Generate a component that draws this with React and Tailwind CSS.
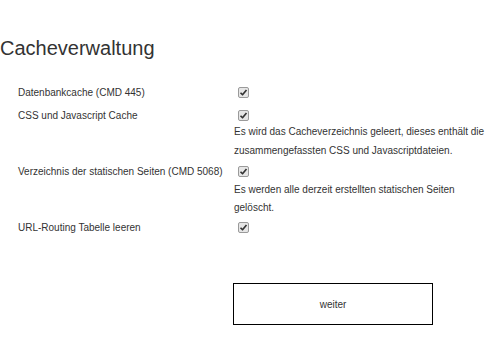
import React from 'react'

const rows = [
  { label: 'Datenbankcache (CMD 445)' },
  {
    label: 'CSS und Javascript Cache',
    desc: 'Es wird das Cacheverzeichnis geleert, dieses enthält die zusammengefassten CSS und Javascriptdateien.',
    descCls: '-mt-[5px] leading-[19px]',
  },
  {
    label: 'Verzeichnis der statischen Seiten (CMD 5068)',
    desc: 'Es werden alle derzeit erstellten statischen Seiten gelöscht.',
    descCls: '-mt-[2px] mb-[-1px] leading-[18px]',
  },
  { label: 'URL-Routing Tabelle leeren' },
]

function Check() {
  return (
    <span className="ml-[4px] inline-flex h-[11px] w-[11px] items-center justify-center rounded-[2px] border border-[#9a9a9a] bg-[#e6e6e6]">
      <svg viewBox="0 0 12 12" className="h-[9px] w-[9px]">
        <path d="M2 6.3 L4.7 9 L10 2.6" fill="none" stroke="#333" strokeWidth="2.2" strokeLinejoin="round" />
      </svg>
    </span>
  )
}

export default function App() {
  return (
    <div className="h-[348px] w-[500px] bg-white pt-[36px] text-[#333]" style={{ fontFamily: '"Liberation Sans", Arial, sans-serif' }}>
      <h1 className="text-[20px] leading-6">Cacheverwaltung</h1>

      <div className="mt-[21px]">
        {rows.map(r => (
          <div key={r.label}>
            <div className="flex h-[23px] items-center">
              <div className="w-[234px] pl-[18px] text-[10px]">{r.label}</div>
              <Check />
            </div>
            {r.desc && (
              <div className={'ml-[234px] w-[255px] text-[10px] ' + r.descCls}>{r.desc}</div>
            )}
          </div>
        ))}
      </div>

      <div className="ml-[233px] mt-[44px] flex h-[42px] w-[200px] items-center justify-center border-[1.5px] border-black text-[10px]">
        weiter
      </div>
    </div>
  )
}
